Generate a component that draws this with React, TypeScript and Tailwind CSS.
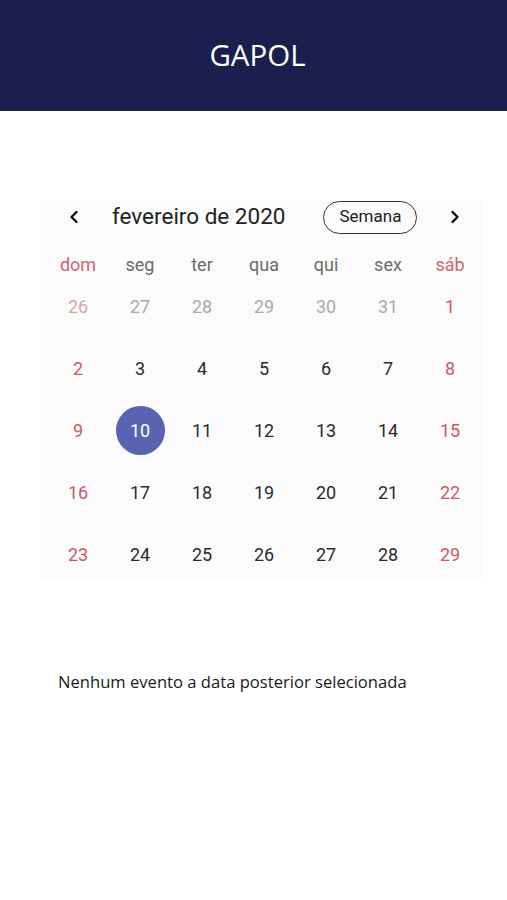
const weekdays = ["dom", "seg", "ter", "qua", "qui", "sex", "sáb"];

type Day = { n: number; muted?: boolean };

const weeks: Day[][] = [
  [
    { n: 26, muted: true },
    { n: 27, muted: true },
    { n: 28, muted: true },
    { n: 29, muted: true },
    { n: 30, muted: true },
    { n: 31, muted: true },
    { n: 1 },
  ],
  [2, 3, 4, 5, 6, 7, 8].map((n) => ({ n })),
  [9, 10, 11, 12, 13, 14, 15].map((n) => ({ n })),
  [16, 17, 18, 19, 20, 21, 22].map((n) => ({ n })),
  [23, 24, 25, 26, 27, 28, 29].map((n) => ({ n })),
];

function Chevron({ dir }: { dir: "left" | "right" }) {
  return (
    <svg width="12" height="14" viewBox="0 0 12 14" fill="none">
      <polyline
        points={dir === "left" ? "8.5,2 3.5,7 8.5,12" : "3.5,2 8.5,7 3.5,12"}
        stroke="#111"
        strokeWidth="2.4"
        strokeLinecap="round"
        strokeLinejoin="round"
      />
    </svg>
  );
}

function dayColor(d: Day, col: number) {
  const weekend = col === 0 || col === 6;
  if (d.muted) return weekend ? "text-[#dba3a8]" : "text-[#a9a9a9]";
  return weekend ? "text-[#cc5a64]" : "text-[#2b2b2b]";
}

export default function App() {
  return (
    <div className="min-h-[900px] bg-white font-['Roboto',sans-serif]">
      <header className="flex h-[111px] items-center justify-center bg-[#1a1f4d]">
        <h1 className="pl-[8px] font-['Open_Sans',sans-serif] text-[29.5px] text-white">
          GAPOL
        </h1>
      </header>

      <section className="ml-[40px] mt-[89px] w-[442px] bg-[#fbfbfb]">
        <div className="flex h-[34px] items-center">
          <button className="ml-[28px] flex w-[12px] items-center justify-center">
            <Chevron dir="left" />
          </button>
          <span className="ml-[32px] text-[22.5px] text-[#222]">
            fevereiro de 2020
          </span>
          <button className="ml-[38px] flex h-[33px] w-[94px] items-center justify-center rounded-full border border-[#333] text-[17px] text-[#222]">
            Semana
          </button>
          <button className="ml-[32px] flex w-[12px] items-center justify-center">
            <Chevron dir="right" />
          </button>
        </div>

        <div className="mt-[17px] grid h-[24px] grid-cols-[repeat(7,62px)] pl-[7px]">
          {weekdays.map((w, i) => (
            <div
              key={w}
              className={`flex items-center justify-center text-[18px] ${
                i === 0 || i === 6 ? "text-[#d0646e]" : "text-[#6b6b6b]"
              }`}
            >
              {w}
            </div>
          ))}
        </div>

        <div className="grid grid-cols-[repeat(7,62px)] pl-[7px]">
          {weeks.map((week, r) =>
            week.map((d, c) => {
              const selected = r === 2 && d.n === 10;
              const last = r === weeks.length - 1;
              return (
                <div
                  key={`${r}-${c}`}
                  className={`flex justify-center ${
                    last ? "h-[55px] items-start pt-[18px]" : "h-[62px] items-center"
                  }`}
                >
                  {selected ? (
                    <span className="flex h-[49px] w-[49px] items-center justify-center rounded-full bg-[#5a62b2] text-[18px] text-white">
                      {d.n}
                    </span>
                  ) : (
                    <span className={`text-[18px] ${dayColor(d, c)}`}>{d.n}</span>
                  )}
                </div>
              );
            })
          )}
        </div>
      </section>

      <p className="ml-[58px] mt-[92px] font-['Open_Sans',sans-serif] text-[16.6px] text-[#1a1a1a]">
        Nenhum evento a data posterior selecionada
      </p>
    </div>
  );
}
